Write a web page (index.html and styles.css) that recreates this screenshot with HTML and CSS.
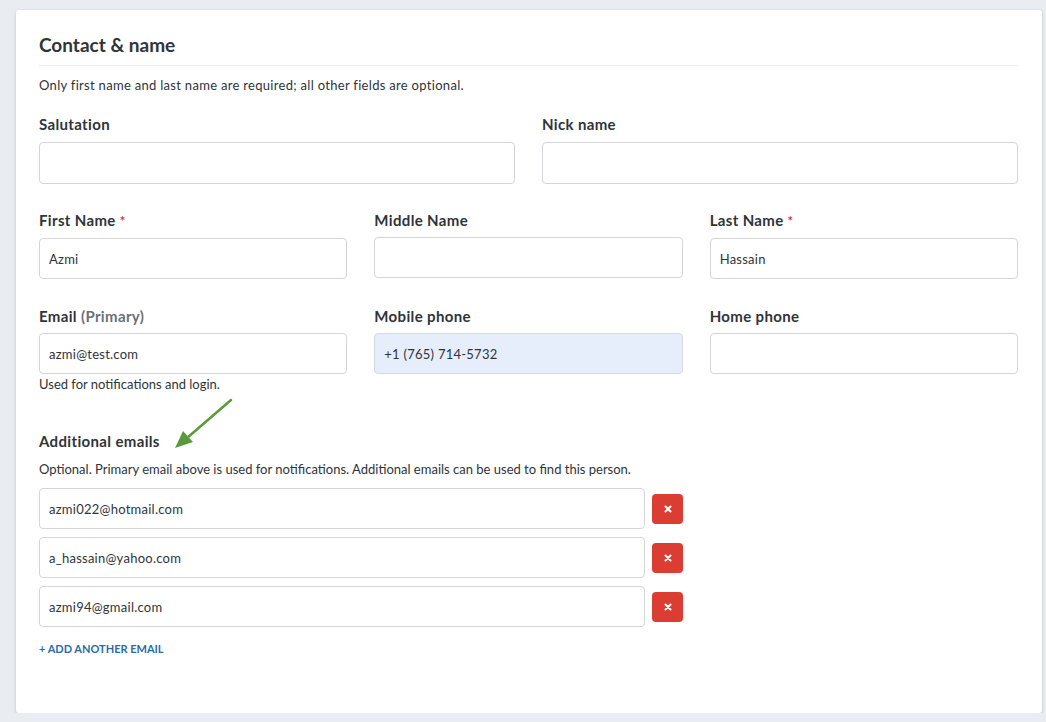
FILE: index.html
```html
<!DOCTYPE html>
<html lang="en">

<head>
    <meta charset="UTF-8">
    <meta name="viewport" content="width=device-width, initial-scale=1.0">
    <title>Contact &amp; name</title>
    <link rel="stylesheet" href="styles.css">
</head>

<body>
    <div class="card">
        <h2 class="card-title">Contact &amp; name</h2>
        <p class="card-desc">Only first name and last name are required; all other fields are optional.</p>

        <div class="row row-2">
            <div class="field">
                <label class="field-label">Salutation</label>
                <input class="field-input tall" type="text">
            </div>
            <div class="field">
                <label class="field-label">Nick name</label>
                <input class="field-input tall" type="text">
            </div>
        </div>

        <div class="row row-3">
            <div class="field">
                <label class="field-label">First Name <span class="req">*</span></label>
                <input class="field-input" type="text" value="Azmi">
            </div>
            <div class="field">
                <label class="field-label">Middle Name</label>
                <input class="field-input" type="text">
            </div>
            <div class="field">
                <label class="field-label">Last Name <span class="req">*</span></label>
                <input class="field-input" type="text" value="Hassain">
            </div>
        </div>

        <div class="row row-3">
            <div class="field">
                <label class="field-label">Email <span class="muted">(Primary)</span></label>
                <input class="field-input" type="text" value="azmi@test.com">
                <div class="help">Used for notifications and login.</div>
            </div>
            <div class="field">
                <label class="field-label">Mobile phone</label>
                <input class="field-input filled" type="text" value="+1 (765) 714-5732">
            </div>
            <div class="field">
                <label class="field-label">Home phone</label>
                <input class="field-input" type="text">
            </div>
        </div>

        <div class="extra">
            <!-- annotation arrow -->
            <svg class="arrow" width="70" height="60" viewBox="0 0 70 60">
                <line x1="66" y1="2" x2="22" y2="40" stroke="#5b9a3c" stroke-width="2.5" stroke-linecap="round"/>
                <polygon points="10,50 18,33 28,44" fill="#5b9a3c"/>
            </svg>
            <div class="field-label">Additional emails</div>
            <p class="extra-desc">Optional. Primary email above is used for notifications. Additional emails can be used to find this person.</p>

            <div class="email-list">
                <div class="email-row">
                    <input class="field-input" type="text" value="azmi022@hotmail.com">
                    <button class="del-btn"><svg width="8" height="8" viewBox="0 0 8 8"><path d="M1.5 1.5l5 5M6.5 1.5l-5 5" stroke="#fff" stroke-width="2" stroke-linecap="round"/></svg></button>
                </div>
                <div class="email-row">
                    <input class="field-input" type="text" value="a_hassain@yahoo.com">
                    <button class="del-btn"><svg width="8" height="8" viewBox="0 0 8 8"><path d="M1.5 1.5l5 5M6.5 1.5l-5 5" stroke="#fff" stroke-width="2" stroke-linecap="round"/></svg></button>
                </div>
                <div class="email-row">
                    <input class="field-input" type="text" value="azmi94@gmail.com">
                    <button class="del-btn"><svg width="8" height="8" viewBox="0 0 8 8"><path d="M1.5 1.5l5 5M6.5 1.5l-5 5" stroke="#fff" stroke-width="2" stroke-linecap="round"/></svg></button>
                </div>
            </div>

            <a class="add-link" href="#">+ ADD ANOTHER EMAIL</a>
        </div>
    </div>
</body>

</html>
```

FILE: styles.css
```css
body {
    margin: 0;
    background-color: #e9edf1;
    font-family: Lato, "Liberation Sans", sans-serif;
    color: #2f3439;
}

.card {
    margin: 10px 4px 0 16px;
    height: 703px;
    box-sizing: border-box;
    background-color: white;
    border-radius: 3px;
    box-shadow: 0 1px 3px rgba(40, 50, 60, 0.25);
    padding: 23px 24px 0 23px;
}

.card-title {
    margin: 0;
    font-size: 19px;
    line-height: 24px;
    font-weight: 700;
    padding-bottom: 8px;
    border-bottom: 1px solid #eceef0;
}

.card-desc {
    margin: 10px 0 0 0;
    font-size: 13px;
    line-height: 18px;
    letter-spacing: 0.3px;
}

.row {
    display: grid;
    column-gap: 27px;
}

.row-2 {
    grid-template-columns: 1fr 1fr;
    margin-top: 20px;
}

.row-3 {
    grid-template-columns: 1fr 1fr 1fr;
    margin-top: 26px;
}

.row-3 + .row-3 {
    margin-top: 27px;
}

.field {
    display: flex;
    flex-direction: column;
}

.field-label {
    display: block;
    font-size: 15px;
    line-height: 20px;
    font-weight: 700;
    letter-spacing: 0.35px;
    margin-bottom: 7px;
}

.row-2 .field-label {
    margin-bottom: 8px;
}

.req {
    color: #cf3b3b;
    font-size: 13px;
}

.muted {
    color: #6b7076;
}

.field-input {
    height: 41px;
    box-sizing: border-box;
    border: 1px solid #d3d5d8;
    border-radius: 4px;
    padding: 0 9px;
    font-family: inherit;
    font-size: 13px;
    letter-spacing: 0.25px;
    color: #2f3439;
    background-color: white;
    outline: none;
}

.field-input.tall {
    height: 42px;
}

.field-input.filled {
    background-color: #e6eefb;
    border-color: #d6dbe3;
}

.help {
    font-size: 13px;
    line-height: 18px;
    margin-top: 1px;
}

.extra {
    position: relative;
    margin-top: 38px;
}

.extra .field-label {
    margin-bottom: 0;
}

.arrow {
    position: absolute;
    left: 126px;
    top: -33px;
}

.extra-desc {
    margin: 9px 0 0 0;
    font-size: 13px;
    line-height: 18px;
}

.email-list {
    margin-top: 10px;
    display: flex;
    flex-direction: column;
    gap: 8px;
}

.email-row {
    display: flex;
    align-items: center;
    gap: 7px;
}

.email-row .field-input {
    width: 606px;
}

.del-btn {
    width: 31px;
    height: 30px;
    border: none;
    border-radius: 4px;
    background-color: #dc3d33;
    display: flex;
    align-items: center;
    justify-content: center;
    padding: 0;
}

.add-link {
    display: inline-block;
    margin-top: 15px;
    font-size: 11px;
    line-height: 14px;
    font-weight: 700;
    color: #2a6ca3;
    text-decoration: none;
}
```
